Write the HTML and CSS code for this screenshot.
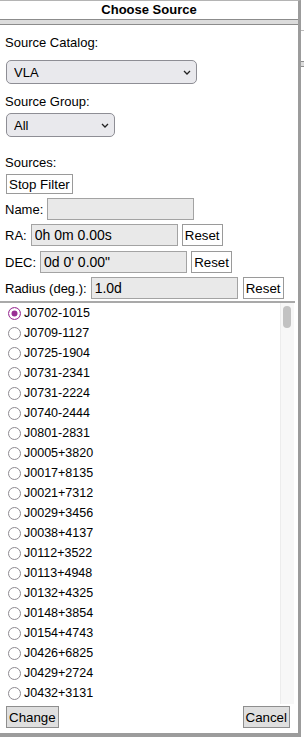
FILE: index.html
```html
<!DOCTYPE html>
<html lang="en">
<head>
    <meta charset="UTF-8">
    <title>Choose Source</title>
    <link rel="stylesheet" href="styles.css">
</head>
<body>
    <div class="page">
        <div class="dialog">
            <div class="title">Choose Source</div>
            <div class="title-bar"></div>

            <div class="content">
                <div class="label first">Source Catalog:</div>
                <div class="select-wrap catalog">
                    <select class="select">
                        <option>VLA</option>
                    </select>
                    <svg class="chevron" width="8" height="5" viewBox="0 0 8 5"><path d="M1 1 L4 4 L7 1" fill="none" stroke="#222" stroke-width="1.3"/></svg>
                </div>

                <div class="label group-label">Source Group:</div>
                <div class="select-wrap group">
                    <select class="select">
                        <option>All</option>
                    </select>
                    <svg class="chevron" width="8" height="5" viewBox="0 0 8 5"><path d="M1 1 L4 4 L7 1" fill="none" stroke="#222" stroke-width="1.3"/></svg>
                </div>

                <div class="label sources-label">Sources:</div>
                <button class="btn stop">Stop Filter</button>

                <div class="field name-row">
                    <span class="field-label">Name:</span>
                    <input class="text" type="text" value="">
                </div>
                <div class="field">
                    <span class="field-label">RA:</span>
                    <input class="text" type="text" value="0h 0m 0.00s">
                    <button class="btn reset">Reset</button>
                </div>
                <div class="field dec-row">
                    <span class="field-label">DEC:</span>
                    <input class="text" type="text" value="0d 0' 0.00&quot;">
                    <button class="btn reset">Reset</button>
                </div>
                <div class="field">
                    <span class="field-label">Radius (deg.):</span>
                    <input class="text" type="text" value="1.0d">
                    <button class="btn reset wide-gap">Reset</button>
                </div>
            </div>

            <div class="list">
                <div class="rows" id="rows"></div>
                <div class="scrollbar"><div class="thumb"></div></div>
            </div>

            <div class="actions">
                <button class="btn gray">Change</button>
                <button class="btn gray">Cancel</button>
            </div>
        </div>
        <div class="backdrop">
            <div class="bg-line"></div>
            <div class="bg-bar"></div>
        </div>
    </div>

    <script>
        // source list
        var sources = [
            'J0702-1015', 'J0709-1127', 'J0725-1904', 'J0731-2341', 'J0731-2224',
            'J0740-2444', 'J0801-2831', 'J0005+3820', 'J0017+8135', 'J0021+7312',
            'J0029+3456', 'J0038+4137', 'J0112+3522', 'J0113+4948', 'J0132+4325',
            'J0148+3854', 'J0154+4743', 'J0426+6825', 'J0429+2724', 'J0432+3131'
        ];
        var rows = document.getElementById('rows');
        sources.forEach(function (name, i) {
            var row = document.createElement('label');
            row.className = 'row';
            var dot = document.createElement('span');
            dot.className = i === 0 ? 'radio checked' : 'radio';
            var text = document.createElement('span');
            text.textContent = name;
            row.appendChild(dot);
            row.appendChild(text);
            rows.appendChild(row);
        });
    </script>
</body>
</html>
```

FILE: styles.css
```css
body {
    margin: 0;
    background: #fff;
    font-family: "Liberation Sans", Arial, sans-serif;
    font-size: 13px;
    color: #000;
}
.page {
    display: flex;
    height: 737px;
    overflow: hidden;
}
.dialog {
    width: 298px;
    flex: none;
    display: flex;
    flex-direction: column;
    border-top: 1px solid #b4b4b4;
    border-right: 3px solid #9c9c9c;
    border-bottom: 4px solid #9c9c9c;
}
.title {
    height: 18px;
    line-height: 18px;
    text-align: center;
    font-weight: bold;
    font-size: 13px;
}
.title-bar {
    height: 4px;
    background: #dcdcdc;
    border-top: 1px solid #8c8c8c;
    border-bottom: 1px solid #8c8c8c;
}
.content {
    display: flex;
    flex-direction: column;
    align-items: flex-start;
    padding: 0 0 0 5px;
}
.label {
    line-height: 15px;
}
.label.first {
    margin-top: 10px;
}
.group-label {
    margin-top: 10px;
}
.sources-label {
    margin-top: 18px;
}
.select-wrap {
    position: relative;
    margin-left: 1px;
}
.select-wrap.catalog {
    margin-top: 10px;
    width: 191px;
}
.select-wrap.group {
    margin-top: 4px;
    width: 109px;
}
.select {
    -webkit-appearance: none;
    appearance: none;
    width: 100%;
    height: 24px;
    margin: 0;
    padding: 0 0 0 7px;
    border: 1px solid #8e8e95;
    border-radius: 5px;
    background: #e9e9ed;
    font-family: "Liberation Sans", Arial, sans-serif;
    font-size: 13px;
    color: #000;
}
.chevron {
    position: absolute;
    right: 6px;
    top: 10px;
    pointer-events: none;
}
.btn {
    -webkit-appearance: none;
    appearance: none;
    margin: 0;
    padding: 0 2px;
    height: 20px;
    border: 1px solid #9a9a9a;
    border-radius: 0;
    background: #fff;
    font-family: "Liberation Sans", Arial, sans-serif;
    font-size: 13.33px;
    color: #000;
}
.btn.stop {
    margin: 4px 0 0 1px;
}
.field {
    display: flex;
    align-items: center;
    gap: 4px;
    margin-top: 4px;
    height: 22px;
}
.name-row {
    margin-top: 4px;
}
.dec-row {
    margin-top: 5px;
}
.field-label {
    line-height: 15px;
}
.text {
    box-sizing: border-box;
    width: 147px;
    height: 22px;
    margin: 0;
    padding: 0 3px;
    border: 1px solid #a3a3a3;
    background: #e9e9e9;
    font-family: "Liberation Sans", Arial, sans-serif;
    font-size: 14px;
    color: #000;
    outline: none;
}
.btn.reset {
    height: 22px;
    width: 41px;
}
.btn.reset.wide-gap {
    margin-left: 1px;
}
.list {
    display: flex;
    width: 295px;
    height: 401px;
    margin-top: 2px;
    border-top: 2px solid #a9a9a9;
}
.rows {
    flex: 1;
    overflow: hidden;
}
.row {
    display: flex;
    align-items: center;
    height: 20px;
    font-size: 12.5px;
}
.radio {
    box-sizing: border-box;
    width: 13px;
    height: 13px;
    margin: 0 3px 0 8px;
    border: 1.5px solid #8d8a90;
    border-radius: 50%;
    background: #fff;
}
.radio.checked {
    border-color: #9a2f94;
    box-shadow: inset 0 0 0 2.5px #fff, inset 0 0 0 6px #9a2f94;
}
.scrollbar {
    width: 13px;
    flex: none;
    background: #f7f7f7;
    border-left: 1px solid #ececec;
    margin-right: 1px;
}
.thumb {
    width: 8px;
    height: 22px;
    margin: 3px 0 0 2px;
    border-radius: 4px;
    background: #c2c2c2;
}
.actions {
    display: flex;
    justify-content: space-between;
    margin-top: 2px;
    padding: 0 8px 5px 6px;
}
.btn.gray {
    height: 22px;
    background: #dfdfdf;
    border-color: #8e8e8e;
}
.backdrop {
    flex: 1;
}
.bg-line {
    height: 1px;
    margin-top: 30px;
    background: #bdbdbd;
}
.bg-bar {
    height: 4px;
    margin-top: 30px;
    background: #dcdcdc;
    border-top: 1px solid #8c8c8c;
    border-bottom: 1px solid #8c8c8c;
}
```
